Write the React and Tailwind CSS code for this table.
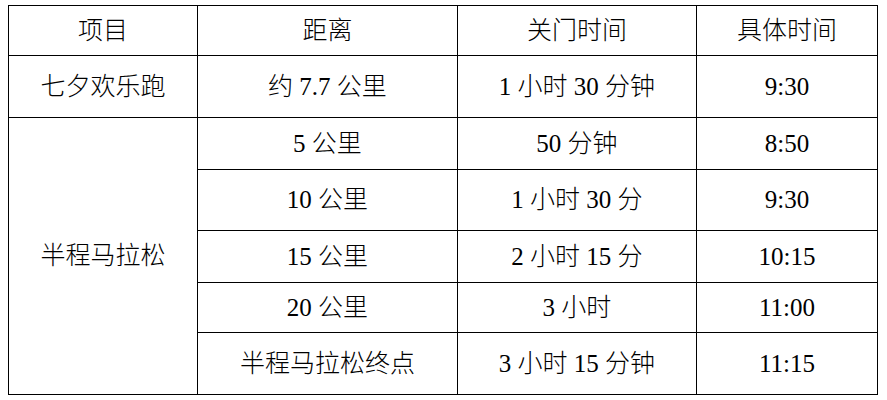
import React from "react";

const rows = [
  { dist: "5 公里", close: "50 分钟", time: "8:50", h: "h-[52px]" },
  { dist: "10 公里", close: "1 小时 30 分", time: "9:30", h: "h-[61px]" },
  { dist: "15 公里", close: "2 小时 15 分", time: "10:15", h: "h-[52px]" },
  { dist: "20 公里", close: "3 小时", time: "11:00", h: "h-[50px]" },
  { dist: "半程马拉松终点", close: "3 小时 15 分钟", time: "11:15", h: "h-[62px]" },
];

export default function App() {
  const cell = "border-[1.5px] border-black text-center align-middle p-0";
  return (
    <div
      className="w-[887px] h-[400px] bg-white pt-[5px] pl-[8px] text-black text-[25px] font-light"
      style={{ fontFamily: '"Liberation Serif", "Noto Sans CJK SC", serif' }}
    >
      <table className="border-collapse table-fixed w-[869px]">
        <colgroup>
          <col className="w-[189px]" />
          <col className="w-[260px]" />
          <col className="w-[239px]" />
          <col className="w-[181px]" />
        </colgroup>
        <tbody>
          <tr className="h-[50px]">
            <td className={cell}>项目</td>
            <td className={cell}>距离</td>
            <td className={cell}>关门时间</td>
            <td className={cell}>具体时间</td>
          </tr>
          <tr className="h-[62px]">
            <td className={cell}>七夕欢乐跑</td>
            <td className={cell}>约 7.7 公里</td>
            <td className={cell}>1 小时 30 分钟</td>
            <td className={cell}>9:30</td>
          </tr>
          {rows.map((r, i) => (
            <tr key={r.dist} className={r.h}>
              {i === 0 && (
                <td className={cell} rowSpan={rows.length}>
                  半程马拉松
                </td>
              )}
              <td className={cell}>{r.dist}</td>
              <td className={cell}>{r.close}</td>
              <td className={cell}>{r.time}</td>
            </tr>
          ))}
        </tbody>
      </table>
    </div>
  );
}
